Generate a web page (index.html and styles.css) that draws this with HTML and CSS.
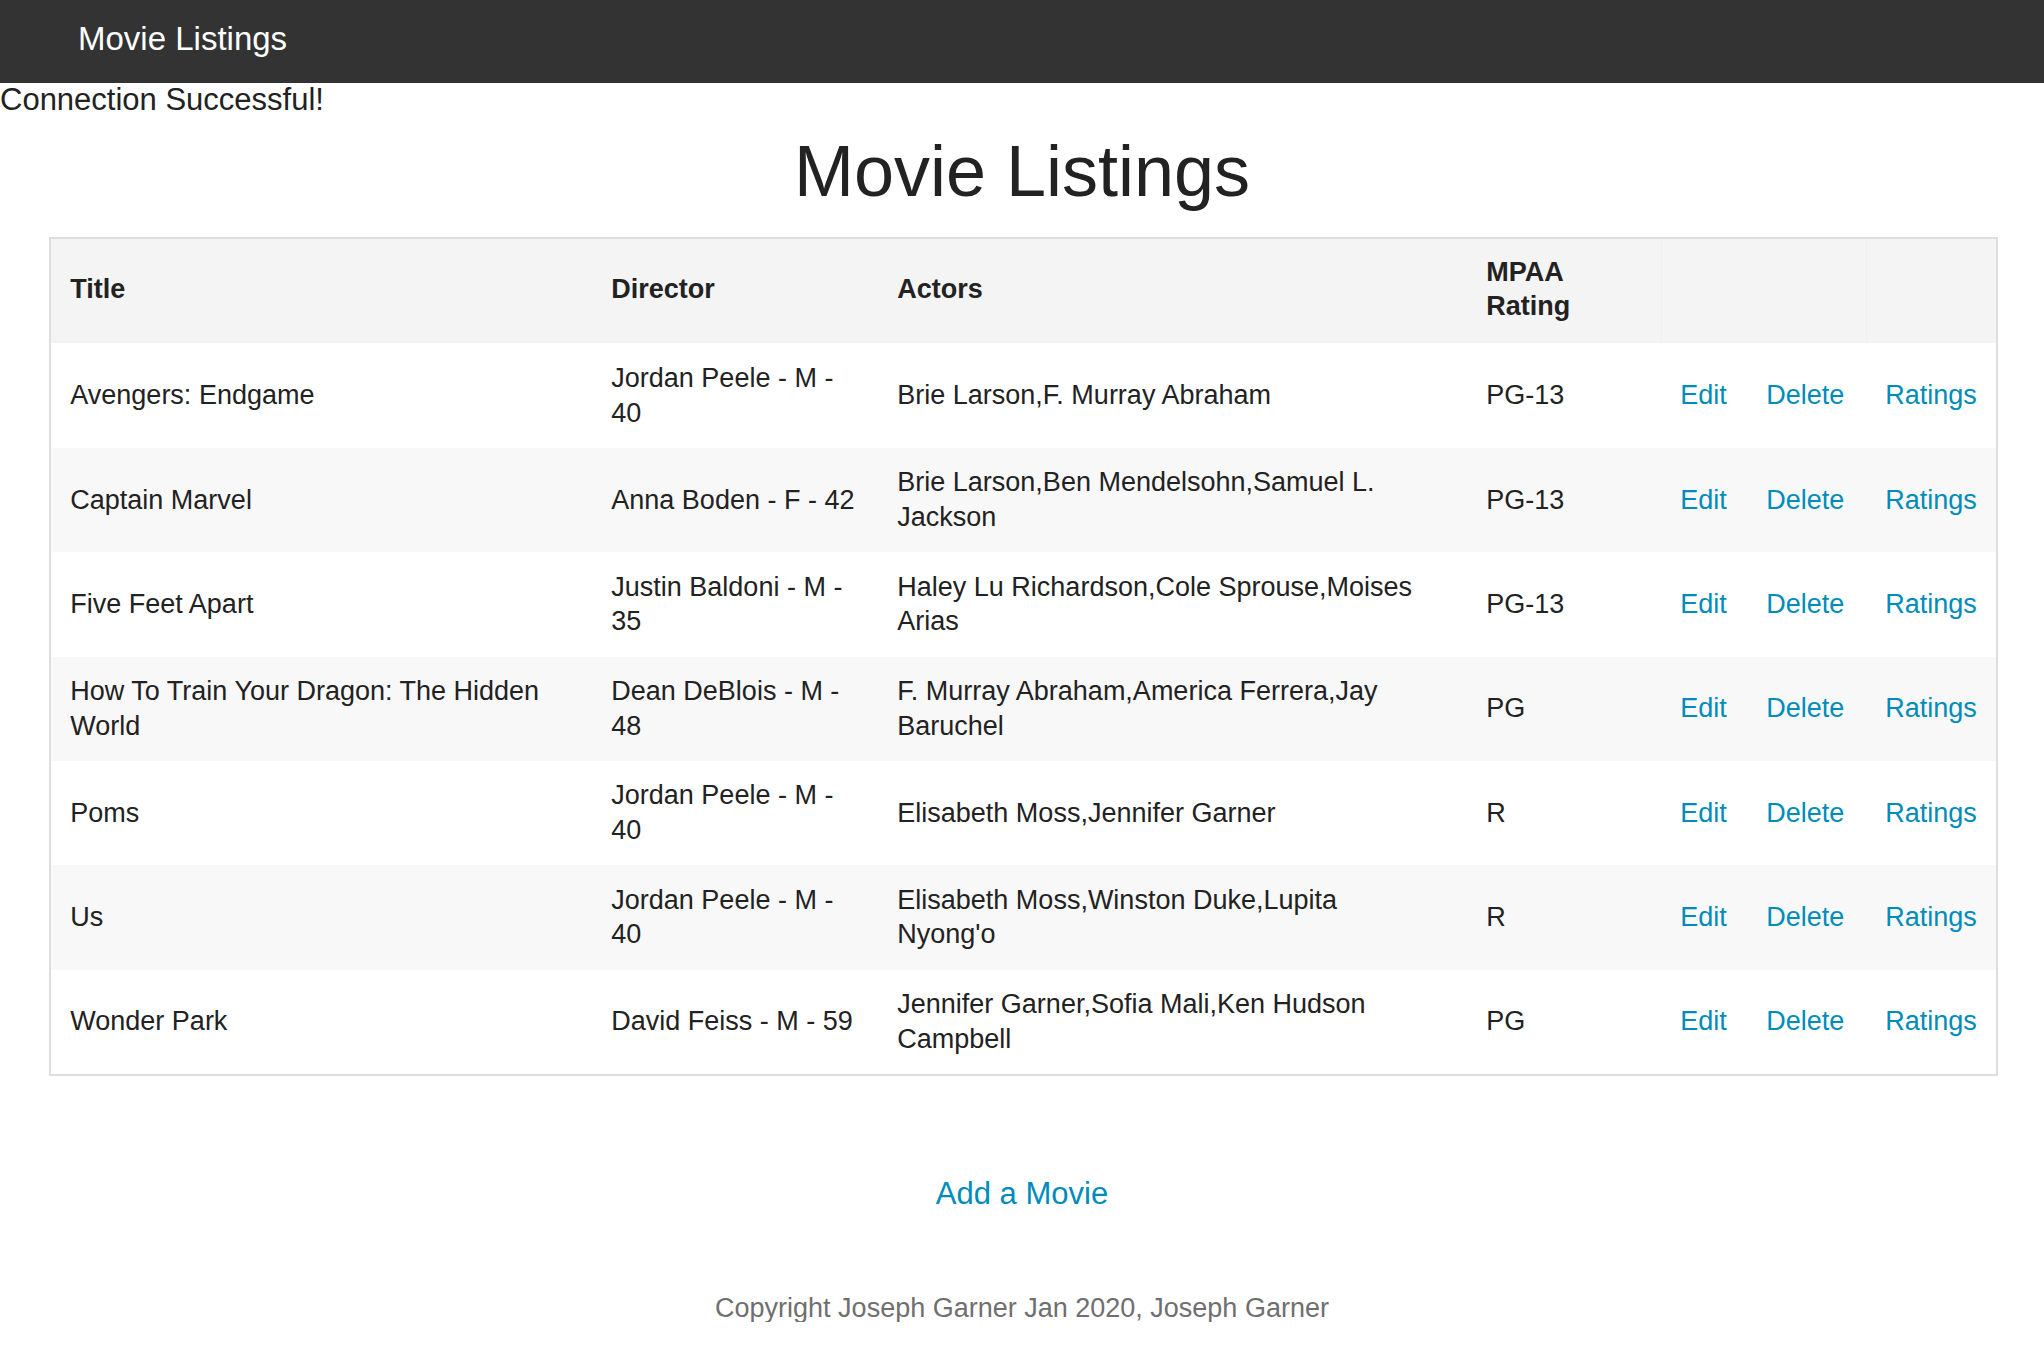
FILE: index.html
```html
<!DOCTYPE html>
<html lang="en">
<head>
<meta charset="utf-8">
<title>Movie Listings</title>
<link rel="stylesheet" href="styles.css">
</head>
<body>
<nav class="topbar"><span class="brand">Movie Listings</span></nav>
<div class="status">Connection Successful!</div>
<h1 class="page-title">Movie Listings</h1>
<div class="table-wrap">
<table class="listing">
<colgroup>
<col class="c-title"><col class="c-director"><col class="c-actors"><col class="c-rating"><col class="c-edit"><col class="c-delete"><col class="c-ratings">
</colgroup>
<thead>
<tr><th>Title</th><th>Director</th><th>Actors</th><th>MPAA Rating</th><th colspan="2" class="sep"></th><th class="sep"></th></tr>
</thead>
<tbody>
<tr><td>Avengers: Endgame</td><td>Jordan Peele - M - 40</td><td class="actors">Brie Larson,F. Murray Abraham</td><td>PG-13</td><td><a href="#">Edit</a></td><td><a href="#">Delete</a></td><td><a href="#">Ratings</a></td></tr>
<tr><td>Captain Marvel</td><td>Anna Boden - F - 42</td><td class="actors">Brie Larson,Ben Mendelsohn,Samuel L. Jackson</td><td>PG-13</td><td><a href="#">Edit</a></td><td><a href="#">Delete</a></td><td><a href="#">Ratings</a></td></tr>
<tr><td>Five Feet Apart</td><td>Justin Baldoni - M - 35</td><td class="actors">Haley Lu Richardson,Cole Sprouse,Moises Arias</td><td>PG-13</td><td><a href="#">Edit</a></td><td><a href="#">Delete</a></td><td><a href="#">Ratings</a></td></tr>
<tr><td>How To Train Your Dragon: The Hidden World</td><td>Dean DeBlois - M - 48</td><td class="actors">F. Murray Abraham,America Ferrera,Jay Baruchel</td><td>PG</td><td><a href="#">Edit</a></td><td><a href="#">Delete</a></td><td><a href="#">Ratings</a></td></tr>
<tr><td>Poms</td><td>Jordan Peele - M - 40</td><td class="actors">Elisabeth Moss,Jennifer Garner</td><td>R</td><td><a href="#">Edit</a></td><td><a href="#">Delete</a></td><td><a href="#">Ratings</a></td></tr>
<tr><td>Us</td><td>Jordan Peele - M - 40</td><td class="actors">Elisabeth Moss,Winston Duke,Lupita Nyong'o</td><td>R</td><td><a href="#">Edit</a></td><td><a href="#">Delete</a></td><td><a href="#">Ratings</a></td></tr>
<tr><td>Wonder Park</td><td>David Feiss - M - 59</td><td class="actors">Jennifer Garner,Sofia Mali,Ken Hudson Campbell</td><td>PG</td><td><a href="#">Edit</a></td><td><a href="#">Delete</a></td><td><a href="#">Ratings</a></td></tr>
</tbody>
</table>
</div>
<div class="add"><a href="#">Add a Movie</a></div>
<footer class="copyright">Copyright Joseph Garner Jan 2020, Joseph Garner</footer>
</body>
</html>
```
FILE: styles.css
```css
html, body {
  margin: 0;
  padding: 0;
  background: #fff;
}
body {
  font-family: "Liberation Sans", Arial, sans-serif;
  color: #222;
}
a {
  color: #008cba;
  text-decoration: none;
}
.topbar {
  background: #333;
  height: 83px;
  box-sizing: border-box;
  padding: 0 0 5px 78px;
}
.brand {
  display: block;
  color: #fff;
  font-size: 33px;
  line-height: 78px;
}
.status {
  font-size: 31px;
  line-height: 33px;
}
.page-title {
  margin: 12px 0 23px;
  font-size: 72px;
  line-height: 86px;
  font-weight: normal;
  text-align: center;
  color: #222;
}
.table-wrap {
  padding: 0 46px 0 49px;
}
.listing {
  width: 1949px;
  table-layout: fixed;
  border-collapse: separate;
  border-spacing: 0;
  border: 2px solid #dedede;
  font-size: 27px;
  line-height: 34.8px;
}
.c-title { width: 541px; }
.c-director { width: 286px; }
.c-actors { width: 589px; }
.c-rating { width: 194px; }
.c-edit { width: 86px; }
.c-delete { width: 119px; }
.c-ratings { width: 130px; }
.listing thead th {
  background: #f4f4f4;
  text-align: left;
  font-weight: bold;
  padding: 15.5px 19.3px 19.3px;
  vertical-align: middle;
}
.listing thead th.sep {
  border-left: 1px solid #efefef;
}
.listing td {
  padding: 17.4px 19.3px;
  vertical-align: middle;
}
.listing td.actors {
  padding-right: 26px;
}
.listing tbody tr:nth-child(even) {
  background: #f8f8f8;
}
.add {
  margin-top: 102px;
  font-size: 31px;
  line-height: 31px;
  text-align: center;
}
.copyright {
  margin-top: 86px;
  font-size: 27px;
  line-height: 27px;
  text-align: center;
  color: #6f6f6f;
}
```
